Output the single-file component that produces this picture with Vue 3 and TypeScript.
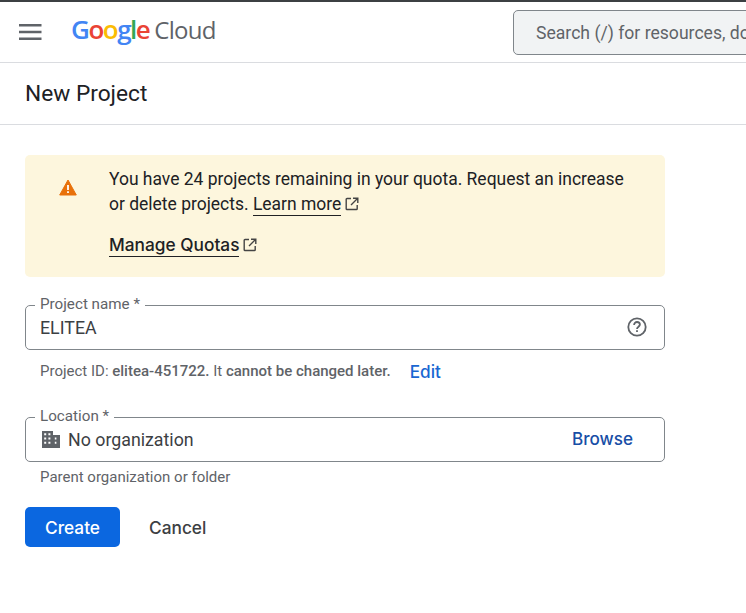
<script setup lang="ts">
const logo: { c: string; color: string }[] = [
  { c: 'G', color: '#4285f4' },
  { c: 'o', color: '#ea4335' },
  { c: 'o', color: '#fbbc04' },
  { c: 'g', color: '#4285f4' },
  { c: 'l', color: '#34a853' },
  { c: 'e', color: '#ea4335' },
]
</script>

<template>
  <div class="page">
    <header class="topbar">
      <button class="menu" aria-label="Main menu">
        <svg width="23" height="18" viewBox="0 0 23 18"><path d="M0 1h22.500v2.500H0zM0 7.700h22.500v2.500H0zM0 14.400h22.500v2.500H0z" fill="#5f6368" /></svg>
      </button>
      <div class="logo">
        <span class="google"><span v-for="(l, i) in logo" :key="i" :style="{ color: l.color }">{{ l.c }}</span></span>
        <span class="cloud">Cloud</span>
      </div>
      <div class="search">Search (/) for resources, docs, products, and more</div>
    </header>
    <div class="titlebar"><h1>New Project</h1></div>
    <main class="content">
      <section class="alert">
        <div class="alert-icon">
          <svg width="18" height="17" viewBox="0 0 18 17"><path d="M9 1 17.300 16H.7z" fill="#e8710a" stroke="#e8710a" stroke-linejoin="round" /><path d="M8.100 6h1.800v5H8.100zM8.100 12.200h1.800v1.800H8.100z" fill="#fff" /></svg>
        </div>
        <div class="alert-body">
          <p>You have 24 projects remaining in your quota. Request an increase or delete projects. <a class="ext">Learn more</a><svg class="ext-icon" width="14" height="14" viewBox="0 0 14 14"><path d="M6 1.500H2a.8.8 0 0 0-.8.8v9.400c0 .4.4.8.8.8h9.400c.4 0 .8-.4.8-.8V8M8 1.200h4.800V6M12.500 1.500 6 8" fill="none" stroke="#444" stroke-width="1.400" /></svg></p>
          <p class="manage"><a class="ext medium">Manage Quotas</a><svg class="ext-icon" width="14" height="14" viewBox="0 0 14 14"><path d="M6 1.500H2a.8.8 0 0 0-.8.8v9.400c0 .4.4.8.8.8h9.400c.4 0 .8-.4.8-.8V8M8 1.200h4.800V6M12.500 1.500 6 8" fill="none" stroke="#444" stroke-width="1.400" /></svg></p>
        </div>
      </section>

      <fieldset class="field first">
        <legend>Project name *</legend>
        <div class="field-row">
          <span class="value">ELITEA</span>
          <svg class="help" width="22" height="22" viewBox="0 0 22 22"><circle cx="11" cy="11" r="8.700" fill="none" stroke="#5f6368" stroke-width="1.800" /><path d="M8.100 8.900c0-1.700 1.300-2.900 2.900-2.900s2.900 1.100 2.900 2.600c0 2-2.900 2.200-2.900 4.400" fill="none" stroke="#5f6368" stroke-width="1.800" /><rect x="10.100" y="14.200" width="1.800" height="1.800" fill="#5f6368" /></svg>
        </div>
      </fieldset>
      <div class="hint id-row">
        <span>Project ID: <b>elitea-451722.</b> It <b>cannot be changed later.</b></span>
        <a class="edit">Edit</a>
      </div>

      <fieldset class="field second">
        <legend>Location *</legend>
        <div class="field-row">
          <svg class="org" width="18" height="17" viewBox="0 0 18 17"><path fill-rule="evenodd" d="M0 0h11v4h7v13H0zM2.200 2.200v2h2v-2zM6.400 2.200v2h2v-2zM2.200 6.500v2h2v-2zM6.400 6.500v2h2v-2zM2.200 10.800v2h2v-2zM6.400 10.800v2h2v-2zM12.800 6.500v2h1.600v-2zM12.800 10.800v2h1.600v-2z" fill="#5f6368" /></svg>
          <span class="value">No organization</span>
          <a class="browse">Browse</a>
        </div>
      </fieldset>
      <div class="hint parent">Parent organization or folder</div>

      <div class="actions">
        <button class="create">Create</button>
        <button class="cancel">Cancel</button>
      </div>
    </main>
  </div>
</template>

<style>
html, body { margin: 0; background: #fff; overflow: hidden; }
</style>

<style scoped>
.page { width: 746px; height: 613px; overflow: hidden; font-family: Roboto, "Liberation Sans", sans-serif; color: #202124; box-sizing: border-box; border-top: 2px solid #3c4043; }
.topbar { height: 60px; display: flex; align-items: center; border-bottom: 1px solid #dadce0; white-space: nowrap; overflow: hidden; }
.menu { border: 0; background: none; padding: 0; margin: 0 0 0 19px; width: 23px; height: 18px; display: flex; flex: none; }
.logo { margin-left: 29px; display: flex; align-items: baseline; gap: 5px; flex: none; width: 146px; margin-top: -6px; font-family: "Open Sans", sans-serif; font-size: 26px; letter-spacing: -1.500px; }
.google { font-weight: 600; }
.cloud { color: #5f6368; font-size: 24px; letter-spacing: -.7px; }
.search { flex: none; margin-left: 296px; width: 300px; height: 45px; box-sizing: border-box; background: #f1f3f4; border: 1px solid #80868b; border-radius: 5px; padding-left: 22px; font-size: 17.600px; line-height: 44px; color: #5f6368; overflow: hidden; }
.titlebar { height: 61px; display: flex; align-items: center; padding-left: 25px; border-bottom: 1px solid #dadce0; }
h1 { margin: -1px 0 0; font-size: 22.700px; font-weight: 400; color: #202124; }
.content { padding: 30px 0 0 25px; width: 640px; }
.alert { height: 122px; box-sizing: border-box; background: #fdf6dd; border-radius: 5px; display: flex; padding: 12px 30px 0 34px; }
.alert-icon { width: 50px; flex: none; padding-top: 12px; box-sizing: border-box; }
.alert-body { font-size: 17.480px; line-height: 25px; color: #202124; }
.alert-body p { margin: 0; }
.ext { color: #202124; border-bottom: 1px solid #202124; padding-bottom: 1px; }
.medium { font-family: Inter, sans-serif; font-size: 17.300px; font-weight: 500; }
.ext-icon { margin-left: 4px; vertical-align: -1px; }
.manage { margin-top: 15px !important; }
.field { margin: 0; padding: 0 9px; border: 1px solid #80868b; border-radius: 5px; height: 54px; box-sizing: border-box; min-width: 0; }
.field legend { padding: 0 5px 2px; margin-left: 0; font-size: 15.200px; line-height: 17px; color: #5f6368; }
.first { margin-top: 19px; }
.field-row { height: 33px; display: flex; align-items: center; margin-top: -4px; padding-left: 5px; }
.value { font-size: 17.800px; color: #3c4043; }
.help { margin-left: auto; margin-right: 7px; margin-top: -2px; }
.hint { font-size: 15px; color: #5f6368; }
.hint b { font-weight: 500; }
.id-row { height: 40px; padding: 2px 0 0 15px; display: flex; align-items: center; box-sizing: border-box; }
.edit { margin-left: 19px; color: #1967d2; font-family: Inter, sans-serif; font-size: 17.200px; font-weight: 500; }
.second { margin-top: 18px; }
.org { margin: 0 8px 0 2px; }
.browse { margin-left: auto; margin-right: 22px; margin-top: -2px; color: #174ea6; font-family: Inter, sans-serif; font-size: 17.100px; font-weight: 500; }
.parent { padding: 6px 0 0 15px; line-height: 18px; }
.actions { margin-top: 21px; display: flex; align-items: center; }
.actions button { font-family: Inter, sans-serif; font-size: 17.300px; font-weight: 500; border: 0; padding: 0; height: 40px; }
.create { width: 95px; background: #0b67e0; color: #fff; border-radius: 5px; }
.cancel { margin-left: 29px; background: none; color: #3c4043; }
</style>
